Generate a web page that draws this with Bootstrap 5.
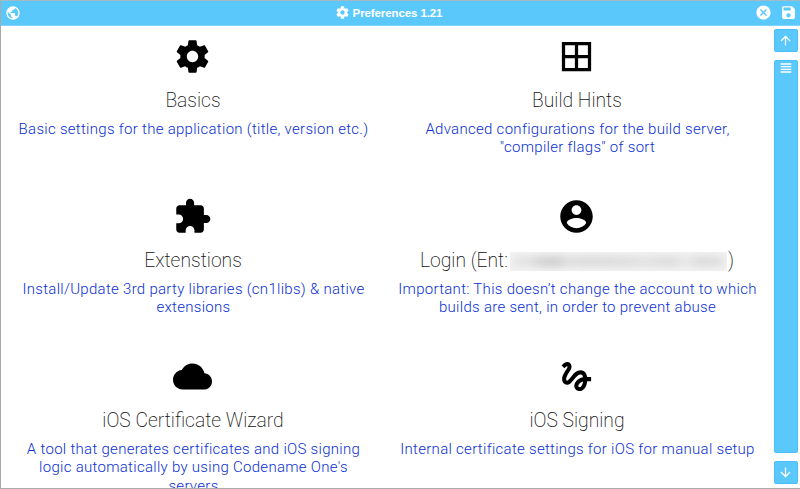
<!DOCTYPE html>
<html lang="en">
<head>
<meta charset="utf-8">
<title>Preferences</title>
<link href="https://cdn.jsdelivr.net/npm/bootstrap@5.3.0/dist/css/bootstrap.min.css" rel="stylesheet">
<style>
body{width:800px;height:489px;background:#fff;font-family:Roboto,sans-serif;border:1px solid #a9a9a9;border-right:0;border-top-color:#a5b9c5}
svg{fill:currentColor;display:block;flex:none}
.topbar{height:25px;background:#5ac8fb;border-bottom:1px solid #7fd5fc;color:#fff;padding:0 3px 1px 4px;font:bold 11.5px/14px "Liberation Sans",Arial,sans-serif;flex:none}
.side-slot{width:60px}
.app-title{letter-spacing:-.1px;gap:3px;margin-right:25px}
.tiles{display:grid;grid-template-columns:384px 384px;grid-auto-rows:160px;margin-left:-1px}
.tile{padding-top:11px;color:#000}
.tile svg{width:39px;height:39px}
.tile h2{font-size:19.3px;font-weight:200;line-height:24px;margin:13px 0 6.9px 2px;color:#111;white-space:nowrap}
.tile p{font-size:15px;font-weight:300;line-height:18.5px;color:#0a30d2;margin:0 0 0 3px;white-space:nowrap;letter-spacing:.29px}
.redacted{width:217px;height:19px;background:#f3f3f3;margin:0 1px 0 2px;padding:5px 3px;overflow:hidden}
.smudge{height:9px;filter:blur(4px);background:linear-gradient(90deg,#e0e0e0 0 8%,#ccc 13%,#c6c6c6 20%,#ddd 27%,#d6d6d6 34%,#dadada 55%,#dfdfdf 62%,#d8d8d8 76%,#e8e8e8 82%,#d6d6d6 88%,#dcdcdc)}
.scroller{width:24px;margin:3px 2px 4px 0;gap:8px;color:#fff}
.scroller>div{background:#5ac8fb;border:1px solid #49befa;border-radius:2px}
.step{height:23px;flex:none}
.icon-pull{margin-right:1px;margin-top:-1px}
</style>
<script src="https://cdn.jsdelivr.net/npm/bootstrap@5.3.0/dist/js/bootstrap.bundle.min.js"></script>
</head>
<body class="d-flex flex-column overflow-hidden">
<svg width="0" height="0" class="position-absolute">
<symbol id="gear" viewBox="0 0 24 24"><path d="M19.43 12.98c.04-.32.07-.64.07-.98s-.03-.66-.07-.98l2.11-1.65c.19-.15.24-.42.12-.64l-2-3.46c-.12-.22-.39-.3-.61-.22l-2.49 1c-.52-.4-1.08-.73-1.69-.98l-.38-2.65C14.46 2.18 14.25 2 14 2h-4c-.25 0-.46.18-.49.42l-.38 2.65c-.61.25-1.17.59-1.69.98l-2.49-1c-.23-.09-.49 0-.61.22l-2 3.46c-.13.22-.07.49.12.64l2.11 1.65c-.04.32-.07.65-.07.98s.03.66.07.98l-2.11 1.65c-.19.15-.24.42-.12.64l2 3.46c.12.22.39.3.61.22l2.49-1c.52.4 1.08.73 1.69.98l.38 2.65c.03.24.24.42.49.42h4c.25 0 .46-.18.49-.42l.38-2.65c.61-.25 1.17-.59 1.69-.98l2.49 1c.23.09.49 0 .61-.22l2-3.46c.12-.22.07-.49-.12-.64l-2.11-1.65zM12 15.5c-1.93 0-3.5-1.57-3.5-3.5s1.57-3.5 3.5-3.5 3.5 1.57 3.5 3.5-1.57 3.5-3.5 3.5z"/></symbol>
</svg>
<header class="topbar d-flex align-items-center justify-content-between">
  <div class="side-slot"><svg width="16" height="16" viewBox="0 0 24 24"><path d="M12 2C6.48 2 2 6.48 2 12s4.48 10 10 10 10-4.48 10-10S17.52 2 12 2zm-1 17.93c-3.95-.49-7-3.85-7-7.93 0-.62.08-1.21.21-1.79L9 15v1c0 1.1.9 2 2 2v1.93zm6.9-2.54c-.26-.81-1-1.39-1.9-1.39h-1v-3c0-.55-.45-1-1-1H8v-2h2c.55 0 1-.45 1-1V7h2c1.1 0 2-.9 2-2v-.41c2.93 1.19 5 4.06 5 7.41 0 2.08-.8 3.97-2.1 5.39z"/></svg></div>
  <div class="app-title d-flex align-items-center"><svg width="15" height="15"><use href="#gear"/></svg><span>Preferences 1.21</span></div>
  <div class="side-slot d-flex justify-content-end gap-2"><svg width="17" height="17" viewBox="0 0 24 24"><path d="M12 2C6.47 2 2 6.47 2 12s4.47 10 10 10 10-4.47 10-10S17.53 2 12 2zm5 13.59L15.59 17 12 13.41 8.41 17 7 15.59 10.59 12 7 8.41 8.41 7 12 10.59 15.59 7 17 8.41 13.41 12 17 15.59z"/></svg><svg width="17" height="17" viewBox="0 0 24 24"><path d="M17 3H5c-1.11 0-2 .9-2 2v14c0 1.1.89 2 2 2h14c1.1 0 2-.9 2-2V7l-4-4zm-5 16c-1.66 0-3-1.34-3-3s1.34-3 3-3 3 1.34 3 3-1.34 3-3 3zm3-10H5V5h10v4z"/></svg></div>
</header>
<div class="d-flex justify-content-between flex-grow-1 overflow-hidden">
<main class="tiles text-center overflow-hidden">
  <section class="tile d-flex flex-column align-items-center"><svg><use href="#gear"/></svg><h2>Basics</h2><p>Basic settings for the application (title, version etc.)</p></section>
  <section class="tile d-flex flex-column align-items-center"><svg viewBox="0 0 24 24"><path d="M3 3v18h18V3H3zm8 16H5v-6h6v6zm0-8H5V5h6v6zm8 8h-6v-6h6v6zm0-8h-6V5h6v6z"/></svg><h2>Build Hints</h2><p>Advanced configurations for the build server,<br>"compiler flags" of sort</p></section>
  <section class="tile d-flex flex-column align-items-center"><svg viewBox="0 0 24 24"><path d="M20.5 11H19V7c0-1.1-.9-2-2-2h-4V3.5C13 2.12 11.88 1 10.5 1S8 2.12 8 3.5V5H4c-1.1 0-1.99.9-1.99 2v3.8H3.5c1.49 0 2.7 1.21 2.7 2.7s-1.21 2.7-2.7 2.7H2V20c0 1.1.9 2 2 2h3.8v-1.5c0-1.49 1.21-2.7 2.7-2.7 1.49 0 2.7 1.21 2.7 2.7V22H17c1.1 0 2-.9 2-2v-4h1.5c1.38 0 2.5-1.12 2.5-2.5S21.88 11 20.5 11z"/></svg><h2>Extenstions</h2><p>Install/Update 3rd party libraries (cn1libs) &amp; native<br>extensions</p></section>
  <section class="tile d-flex flex-column align-items-center"><svg viewBox="0 0 24 24"><path d="M12 2C6.48 2 2 6.48 2 12s4.48 10 10 10 10-4.48 10-10S17.52 2 12 2zm0 3c1.66 0 3 1.34 3 3s-1.34 3-3 3-3-1.34-3-3 1.34-3 3-3zm0 14.2c-2.5 0-4.71-1.28-6-3.22.03-1.99 4-3.08 6-3.08 1.99 0 5.97 1.09 6 3.08-1.29 1.94-3.5 3.22-6 3.22z"/></svg><h2 class="d-flex align-items-center"><span>Login (Ent:</span><div class="redacted"><div class="smudge"></div></div><span>)</span></h2><p>Important: This doesn’t change the account to which<br>builds are sent, in order to prevent abuse</p></section>
  <section class="tile d-flex flex-column align-items-center"><svg viewBox="0 0 24 24"><path d="M19.35 10.04C18.67 6.59 15.64 4 12 4 9.11 4 6.6 5.64 5.35 8.04 2.34 8.36 0 10.91 0 14c0 3.31 2.69 6 6 6h13c2.76 0 5-2.24 5-5 0-2.64-2.05-4.78-4.65-4.96z"/></svg><h2>iOS Certificate Wizard</h2><p>A tool that generates certificates and iOS signing<br>logic automatically by using Codename One's<br>servers</p></section>
  <section class="tile d-flex flex-column align-items-center"><svg viewBox="0 0 24 24"><path d="M4.59 6.89c.7-.71 1.4-1.35 1.71-1.22.5.2 0 1.03-.3 1.52-.25.42-2.86 3.89-2.86 6.31 0 1.28.48 2.34 1.34 2.98.75.56 1.74.73 2.64.46 1.07-.31 1.95-1.4 3.06-2.77 1.21-1.49 2.83-3.44 4.08-3.44 1.63 0 1.65 1.01 1.76 1.79-3.78.64-5.38 3.67-5.38 5.37 0 1.7 1.44 3.09 3.21 3.09 1.63 0 4.29-1.33 4.69-6.1H21v-2.5h-2.47c-.15-1.65-1.09-4.2-4.03-4.2-2.25 0-4.18 1.91-4.94 2.84-.58.73-2.06 2.48-2.29 2.72-.25.3-.68.84-1.11.84-.45 0-.72-.83-.36-1.92.35-1.09 1.4-2.86 1.85-3.52.78-1.14 1.3-1.92 1.3-3.28C8.95 3.69 7.31 3 6.44 3 5.12 3 3.97 4 3.72 4.25c-.36.36-.66.66-.88.93l1.75 1.71zm9.29 11.66c-.31 0-.74-.26-.74-.72 0-.6.73-2.2 2.87-2.76-.3 2.69-1.43 3.48-2.13 3.48z"/></svg><h2>iOS Signing</h2><p>Internal certificate settings for iOS for manual setup</p></section>
</main>
<aside class="scroller d-flex flex-column">
  <div class="step d-flex align-items-center justify-content-center"><svg class="icon-pull" width="15" height="15" viewBox="0 0 24 24"><path d="M4 12l1.41 1.41L11 7.83V20h2V7.83l5.58 5.59L20 12l-8-8-8 8z"/></svg></div>
  <div class="flex-grow-1 d-flex justify-content-center"><svg class="icon-pull" width="16" height="16" viewBox="0 0 24 24"><path d="M4 15h16v-2H4v2zm0 4h16v-2H4v2zm0-8h16V9H4v2zm0-6v2h16V5H4z"/></svg></div>
  <div class="step d-flex align-items-center justify-content-center"><svg class="icon-pull" width="15" height="15" viewBox="0 0 24 24"><path d="M20 12l-1.41-1.41L13 16.17V4h-2v12.17l-5.58-5.59L4 12l8 8 8-8z"/></svg></div>
</aside>
</div>
</body>
</html>
